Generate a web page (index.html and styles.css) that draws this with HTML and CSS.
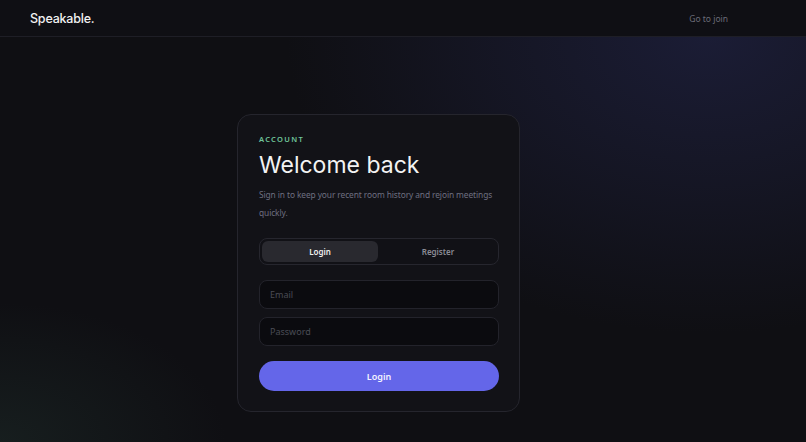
FILE: index.html
```html
<!DOCTYPE html>
<html lang="en">
<head>
  <meta charset="UTF-8" />
  <meta name="viewport" content="width=device-width, initial-scale=1.0"/>
  <title>Speakable - Account</title>
  <link rel="stylesheet" href="styles.css">
</head>
<body>
  <header class="topbar">
    <div class="brand">Speakable.</div>
    <a class="join-link" href="#">Go to join</a>
  </header>

  <main class="page">
    <div class="card">
      <p class="eyebrow">ACCOUNT</p>
      <h1>Welcome back</h1>
      <p class="lead">Sign in to keep your recent room history and rejoin meetings quickly.</p>

      <div class="tabs">
        <button class="tab active" type="button">Login</button>
        <button class="tab" type="button">Register</button>
      </div>

      <form class="auth-form">
        <input type="email" placeholder="Email" />
        <input type="password" placeholder="Password" />
        <button class="submit" type="submit">Login</button>
      </form>
    </div>
  </main>
</body>
</html>
```

FILE: styles.css
```css
html, body {
  height: 100%;
}
body {
  margin: 0;
  font-family: "Noto Sans", sans-serif;
  color: #fff;
  background:
    radial-gradient(ellipse 70% 90% at 88% 8%, rgba(30, 32, 62, 0.8), transparent 75%),
    radial-gradient(ellipse 40% 45% at 0% 100%, rgba(28, 40, 38, 0.6), transparent 70%),
    #0f0f13;
  display: flex;
  flex-direction: column;
  overflow: hidden;
}
.topbar {
  height: 37px;
  box-sizing: border-box;
  display: flex;
  align-items: center;
  justify-content: space-between;
  padding: 0 78px 0 30px;
  background: #0f0f14;
  border-bottom: 1px solid #1e1e26;
}
.brand {
  font-family: Inter, sans-serif;
  font-size: 12.5px;
  font-weight: 500;
  color: #f2f2f2;
  letter-spacing: -0.2px;
}
.join-link {
  font-size: 8.5px;
  color: #6b6c78;
  text-decoration: none;
}
.page {
  flex: 1;
  display: flex;
  justify-content: center;
  padding: 77px 49px 0 0;
}
.card {
  width: 283px;
  height: 298px;
  box-sizing: border-box;
  padding: 20px 20px 20px 21px;
  background: #121217;
  border: 1px solid #25252d;
  border-radius: 14px;
  align-self: flex-start;
}
.eyebrow {
  margin: 0;
  font-size: 7.5px;
  font-weight: 600;
  letter-spacing: 1.3px;
  color: #6fc49a;
  line-height: 9px;
}
h1 {
  margin: 6px 0 0;
  font-family: Inter, sans-serif;
  font-weight: 400;
  font-size: 23px;
  line-height: 30px;
  color: #f3f3f3;
  letter-spacing: 0;
}
.lead {
  margin: 6px 0 0;
  font-size: 8.4px;
  line-height: 18px;
  letter-spacing: -0.1px;
  color: #6e6f80;
}
.tabs {
  margin-top: 16px;
  height: 27px;
  box-sizing: border-box;
  border: 1px solid #26262e;
  border-radius: 8px;
  padding: 2px;
  display: flex;
  gap: 2px;
  background: #111116;
}
.tab {
  flex: 1;
  border: none;
  border-radius: 6px;
  background: transparent;
  color: #8a8b95;
  font-family: "Noto Sans", sans-serif;
  font-size: 8px;
  font-weight: 600;
  cursor: pointer;
}
.tab.active {
  background: #29292f;
  color: #f0f0f0;
}
.auth-form {
  margin-top: 15px;
  display: flex;
  flex-direction: column;
  gap: 8px;
}
.auth-form input {
  height: 29px;
  box-sizing: border-box;
  padding: 0 10px;
  border: 1px solid #23232b;
  border-radius: 8px;
  background: #0b0b0f;
  color: #fff;
  font-family: "Noto Sans", sans-serif;
  font-size: 9px;
}
.auth-form input::placeholder {
  color: #4a4b55;
}
.submit {
  margin-top: 7px;
  height: 30px;
  border: none;
  border-radius: 15px;
  background: #6466e9;
  color: #f3f3ff;
  font-family: "Noto Sans", sans-serif;
  font-size: 9px;
  font-weight: 600;
  cursor: pointer;
}
```
